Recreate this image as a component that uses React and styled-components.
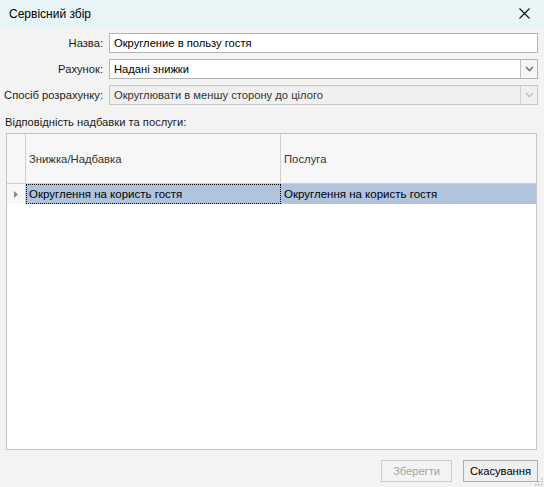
import React from 'react';
import styled, { createGlobalStyle } from 'styled-components';

const GlobalStyle = createGlobalStyle`
  html, body {
    margin: 0;
    padding: 0;
    background: #f3f3f3;
  }
  #root {
    height: 487px;
  }
`;

const Dialog = styled.div`
  width: 544px;
  height: 487px;
  display: flex;
  flex-direction: column;
  background: #f3f3f3;
  font-family: "Liberation Sans", Arial, sans-serif;
  font-size: 11.2px;
  color: #000;
  box-sizing: border-box;
  position: relative;
`;

const TitleBar = styled.div`
  height: 27px;
  flex: none;
  display: flex;
  align-items: center;
  justify-content: space-between;
  padding: 0 14px 0 9px;
  background: #e8f5f7;
  font-size: 12px;
`;

const Close = styled.svg`
  width: 11px;
  height: 11px;
`;

const Form = styled.div`
  display: grid;
  grid-template-columns: 98px 1fr;
  column-gap: 6px;
  row-gap: 6px;
  padding: 6px 6px 0 5px;
  align-items: center;
`;

const Label = styled.label`
  justify-self: end;
  white-space: nowrap;
  color: #1a1a1a;
`;

const Field = styled.div`
  height: 20px;
  box-sizing: border-box;
  border: 1px solid ${p => (p.disabled ? '#c6c6c6' : '#b4b4b4')};
  background: ${p => (p.disabled ? '#f0f0f0' : '#fff')};
  display: flex;
  align-items: center;
  padding-left: 4px;
  color: ${p => (p.disabled ? '#333' : '#000')};
  white-space: nowrap;
`;

const FieldText = styled.span`
  flex: 1;
`;

const DropButton = styled.div`
  width: 16px;
  height: 100%;
  border-left: 1px solid ${p => (p.disabled ? '#d0d0d0' : '#c0c0c0')};
  background: ${p => (p.disabled ? '#f0f0f0' : '#f6f6f6')};
  display: flex;
  align-items: center;
  justify-content: center;
`;

const SectionLabel = styled.div`
  padding: 11px 5px 5px;
  color: #1a1a1a;
`;

const Grid = styled.div`
  flex: 1;
  margin: 0 7px 0 6px;
  border: 1px solid #c4c4c4;
  background: #fff;
  display: flex;
  flex-direction: column;
  font-size: 11.5px;
`;

const Row = styled.div`
  display: grid;
  grid-template-columns: 19px 255px 1fr;
  height: ${p => p.h}px;
`;

const HeaderCell = styled.div`
  background: #f7f7f7;
  border-right: ${p => (p.last ? 'none' : '1px solid #cfcfcf')};
  border-bottom: 1px solid #cfcfcf;
  display: flex;
  align-items: center;
  padding-left: 3px;
  font-size: 11.3px;
  color: #333;
`;

const RowHead = styled.div`
  background: #f7f7f7;
  border-right: 1px solid #cfcfcf;
  display: flex;
  align-items: center;
  justify-content: center;
`;

const Cell = styled.div`
  background: #b0c4de;
  display: flex;
  align-items: center;
  padding-left: 2px;
  box-sizing: border-box;
  border: ${p => (p.focused ? '1px dotted #000' : '1px solid transparent')};
  white-space: nowrap;
`;

const Footer = styled.div`
  display: flex;
  justify-content: flex-end;
  gap: 11px;
  padding: 10px 6px 5px;
`;

const Button = styled.button`
  height: 22px;
  width: ${p => p.w}px;
  box-sizing: border-box;
  border: 1px solid ${p => (p.disabled ? '#cccccc' : '#adadad')};
  background: ${p => (p.disabled ? '#f3f3f3' : '#efefef')};
  color: ${p => (p.disabled ? '#a3a3a3' : '#000')};
  font-family: "Liberation Sans", Arial, sans-serif;
  font-size: 11.2px;
  padding: 0;
`;

const Grip = styled.svg`
  position: absolute;
  right: 1px;
  bottom: 1px;
  width: 8px;
  height: 8px;
`;

const Chevron = ({ color }) => (
  <svg width="9" height="6" viewBox="0 0 9 6">
    <path d="M1 1 L4.5 4.5 L8 1" fill="none" stroke={color} strokeWidth="1.6" />
  </svg>
);

export default function App() {
  return (
    <Dialog>
      <GlobalStyle />
      <TitleBar>
        <span>Сервісний збір</span>
        <Close viewBox="0 0 11 11">
          <path d="M0.5 0.5 L10.5 10.5 M10.5 0.5 L0.5 10.5" stroke="#111" strokeWidth="1.1" />
        </Close>
      </TitleBar>
      <Form>
        <Label>Назва:</Label>
        <Field>
          <FieldText>Округление в пользу гостя</FieldText>
        </Field>
        <Label>Рахунок:</Label>
        <Field>
          <FieldText>Надані знижки</FieldText>
          <DropButton>
            <Chevron color="#777" />
          </DropButton>
        </Field>
        <Label>Спосіб розрахунку:</Label>
        <Field disabled>
          <FieldText>Округлювати в меншу сторону до цілого</FieldText>
          <DropButton disabled>
            <Chevron color="#c4c4c4" />
          </DropButton>
        </Field>
      </Form>
      <SectionLabel>Відповідність надбавки та послуги:</SectionLabel>
      <Grid>
        <Row h={50}>
          <HeaderCell />
          <HeaderCell>Знижка/Надбавка</HeaderCell>
          <HeaderCell last>Послуга</HeaderCell>
        </Row>
        <Row h={20}>
          <RowHead>
            <svg width="4" height="7" viewBox="0 0 4 7">
              <path d="M0 0 L4 3.5 L0 7 Z" fill="#8a8a8a" />
            </svg>
          </RowHead>
          <Cell focused>Округлення на користь гостя</Cell>
          <Cell>Округлення на користь гостя</Cell>
        </Row>
      </Grid>
      <Footer>
        <Button disabled w={71}>Зберегти</Button>
        <Button w={75}>Скасування</Button>
      </Footer>
      <Grip viewBox="0 0 8 8">
        <g fill="#b8b8b8">
          <rect x="6" y="0" width="1.5" height="1.5" />
          <rect x="3" y="3" width="1.5" height="1.5" />
          <rect x="6" y="3" width="1.5" height="1.5" />
          <rect x="0" y="6" width="1.5" height="1.5" />
          <rect x="3" y="6" width="1.5" height="1.5" />
          <rect x="6" y="6" width="1.5" height="1.5" />
        </g>
      </Grip>
    </Dialog>
  );
}
